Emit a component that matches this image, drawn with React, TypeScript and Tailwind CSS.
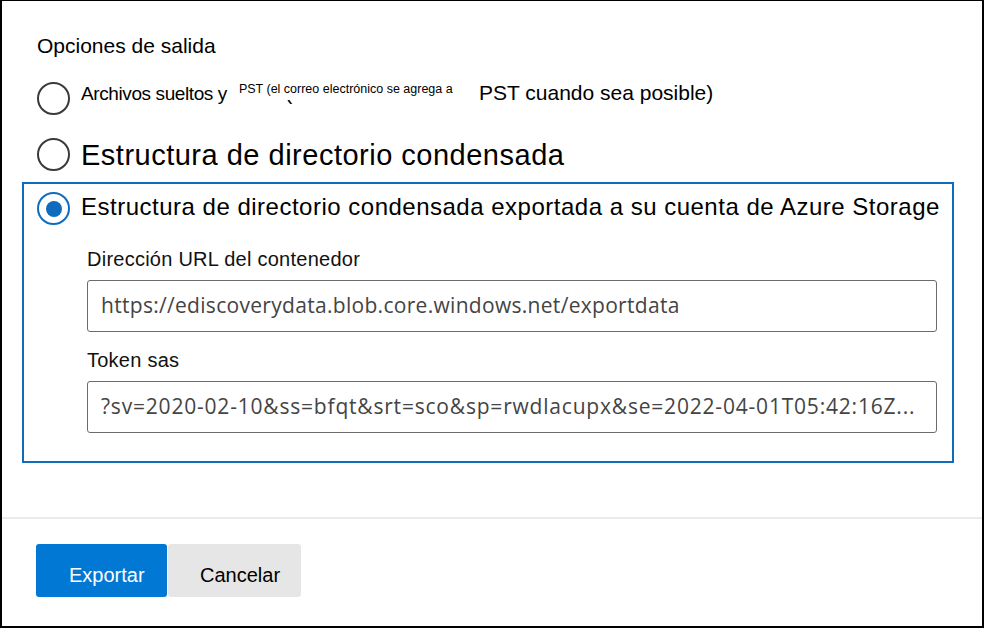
import React from "react";

function Radio({ checked = false }: { checked?: boolean }) {
  if (checked) {
    return (
      <span className="flex h-[33px] w-[33px] shrink-0 items-center justify-center rounded-full border-2 border-[#0f6cbd] bg-white">
        <span className="h-[16px] w-[16px] rounded-full bg-[#0f6cbd]" />
      </span>
    );
  }
  return <span className="block h-[33px] w-[33px] shrink-0 rounded-full border-2 border-[#3a3a3a] bg-white" />;
}

function Field({
  label,
  value,
  className = "",
  valueClass = "",
}: {
  label: string;
  value: string;
  className?: string;
  valueClass?: string;
}) {
  return (
    <div className={className}>
      <div className="text-[20px] leading-[24px] tracking-[0.25px] text-[#111]">{label}</div>
      <div className="mt-[9px] flex h-[52px] w-[850px] items-center overflow-hidden rounded-[3px] border-[1.5px] border-[#6b6b6b] bg-white pl-[13px]">
        <span className={"whitespace-nowrap font-['Open_Sans',sans-serif] text-[21px] text-[#444] " + valueClass}>
          {value}
        </span>
      </div>
    </div>
  );
}

export default function App() {
  return (
    <div className="flex h-[628px] w-[984px] flex-col border-x-2 border-t border-b-2 border-black bg-white font-['Liberation_Sans',Arial,sans-serif] text-black">
      <div className="flex-1 pl-[20px] pt-[33px]">
        <h2 className="pl-[15px] text-[21px] font-normal leading-[24px]">Opciones de salida</h2>

        {/* option 1, with the half-translated overlay label */}
        <div className="mt-[23px] flex items-start pl-[15px]">
          <span className="mt-px">
            <Radio />
          </span>
          <div className="ml-[11px] whitespace-nowrap text-[19px] leading-[24px]">
            <span className="tracking-[-0.4px]">Archivos sueltos y</span>
            <span className="relative ml-[12px] inline-block text-[21px] leading-[24px]">
              PST (email is added to
              <span className="absolute left-[-7px] top-[-3px] h-[22px] w-[238px] bg-white pl-[7px] pt-[4px] text-[12.5px] leading-[14px]">
                PST (el correo electrónico se agrega a
              </span>
            </span>
            <span className="ml-[28px] text-[21px] leading-[24px]">PST cuando sea posible)</span>
          </div>
        </div>

        {/* option 2 */}
        <div className="mt-[23px] flex items-center pl-[15px]">
          <Radio />
          <span className="ml-[11px] text-[29px] leading-[32px] tracking-[0.5px]">
            Estructura de directorio condensada
          </span>
        </div>

        {/* option 3, selected */}
        <div className="mt-[11px] w-[932px] border-2 border-[#0f6cbd] pb-[28px] pl-[13px] pt-[8px]">
          <div className="flex items-start">
            <Radio checked />
            <span className="ml-[11px] mt-px whitespace-nowrap text-[24px] leading-[28px] tracking-[0.5px]">
              Estructura de directorio condensada exportada a su cuenta de Azure Storage
            </span>
          </div>
          <div className="pl-[50px]">
            <Field
              className="mt-[22px]"
              label="Dirección URL del contenedor"
              value="https://ediscoverydata.blob.core.windows.net/exportdata"
              valueClass="tracking-[0.3px]"
            />
            <Field
              className="mt-[16px]"
              label="Token sas"
              value="?sv=2020-02-10&ss=bfqt&srt=sco&sp=rwdlacupx&se=2022-04-01T05:42:16Z..."
              valueClass="tracking-[0.8px]"
            />
          </div>
        </div>
      </div>

      <div className="h-[2px] bg-[#ebebeb]" />

      <div className="flex h-[107px] items-start gap-px pl-[34px] pt-[25px]">
        <button className="h-[53px] w-[131px] rounded-[3px] bg-[#0078d4] pl-[33px] pt-[9px] text-left text-[20px] leading-[24px] text-white">
          Exportar
        </button>
        <button className="h-[53px] w-[133px] rounded-[3px] bg-[#e6e6e6] pl-[32px] pt-[9px] text-left text-[20px] leading-[24px] text-black">
          Cancelar
        </button>
      </div>
    </div>
  );
}
